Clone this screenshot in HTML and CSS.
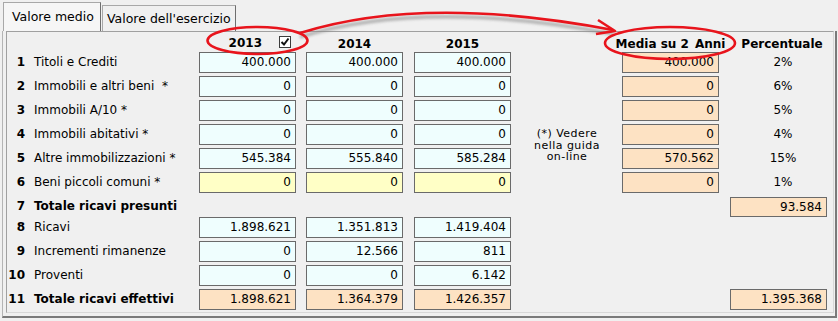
FILE: index.html
```html
<!DOCTYPE html>
<html lang="it">
<head>
<meta charset="utf-8">
<title>Valore medio</title>
<link rel="stylesheet" href="styles.css">
</head>
<body>
<div class="tabs">
  <div class="tab active">Valore medio</div>
  <div class="tab">Valore dell'esercizio</div>
</div>
<div class="page">
  <div class="panel">
    <div class="grid">
      <div class="hd blank"></div>
      <div class="hd c1"><span>2013</span><span class="check"><svg width="10" height="10" viewBox="0 0 10 10"><path d="M1.5 5 L4 7.5 L8.5 1.5" fill="none" stroke="#111" stroke-width="2"/></svg></span></div>
      <div class="hd c2">2014</div>
      <div class="hd c3">2015</div>
      <div class="hd blank-note"></div>
      <div class="hd cm">Media su 2<span class="gap">Anni</span></div>
      <div class="hd cp">Percentuale</div>

      <div class="num">1</div><div class="lbl">Titoli e Crediti</div>
      <div class="box cyan c1">400.000</div><div class="box cyan c2">400.000</div><div class="box cyan c3">400.000</div>
      <div class="box peach cm">400.000</div><div class="pct">2%</div>

      <div class="num">2</div><div class="lbl">Immobili e altri beni&nbsp; *</div>
      <div class="box cyan c1">0</div><div class="box cyan c2">0</div><div class="box cyan c3">0</div>
      <div class="box peach cm">0</div><div class="pct">6%</div>

      <div class="num">3</div><div class="lbl">Immobili A/10 *</div>
      <div class="box cyan c1">0</div><div class="box cyan c2">0</div><div class="box cyan c3">0</div>
      <div class="box peach cm">0</div><div class="pct">5%</div>

      <div class="num">4</div><div class="lbl">Immobili abitativi *</div>
      <div class="box cyan c1">0</div><div class="box cyan c2">0</div><div class="box cyan c3">0</div>
      <div class="note">(*) Vedere<br>nella guida<br>on-line</div>
      <div class="box peach cm">0</div><div class="pct">4%</div>

      <div class="num">5</div><div class="lbl">Altre immobilizzazioni *</div>
      <div class="box cyan c1">545.384</div><div class="box cyan c2">555.840</div><div class="box cyan c3">585.284</div>
      <div class="box peach cm">570.562</div><div class="pct">15%</div>

      <div class="num">6</div><div class="lbl">Beni piccoli comuni *</div>
      <div class="box yellow c1">0</div><div class="box yellow c2">0</div><div class="box yellow c3">0</div>
      <div class="box peach cm">0</div><div class="pct">1%</div>

      <div class="num">7</div><div class="lbl bold">Totale ricavi presunti</div>
      <div class="box peach cp short">93.584</div>

      <div class="num">8</div><div class="lbl">Ricavi</div>
      <div class="box cyan c1">1.898.621</div><div class="box cyan c2">1.351.813</div><div class="box cyan c3">1.419.404</div>

      <div class="num">9</div><div class="lbl">Incrementi rimanenze</div>
      <div class="box cyan c1">0</div><div class="box cyan c2">12.566</div><div class="box cyan c3">811</div>

      <div class="num">10</div><div class="lbl">Proventi</div>
      <div class="box cyan c1">0</div><div class="box cyan c2">0</div><div class="box cyan c3">6.142</div>

      <div class="num">11</div><div class="lbl bold">Totale ricavi effettivi</div>
      <div class="box peach c1">1.898.621</div><div class="box peach c2">1.364.379</div><div class="box peach c3">1.426.357</div>
      <div class="box peach cp">1.395.368</div>
    </div>
  </div>
</div>

<svg class="marks" width="838" height="321" viewBox="0 0 838 321">
  <defs>
    <filter id="blur" x="-10%" y="-50%" width="120%" height="200%">
      <feGaussianBlur stdDeviation="1.5"/>
    </filter>
  </defs>
  <path d="M300 37 Q 424 -2 614 34" fill="none" stroke="#8a8a8a" stroke-width="3" opacity="0.7" filter="url(#blur)"/>
  <path d="M300 33 Q 424 -6 613 30" fill="none" stroke="#e8141c" stroke-width="2.6"/>
  <path d="M598 20 L615 31 L596 34" fill="none" stroke="#e8141c" stroke-width="2.6" stroke-linejoin="round"/>
  <ellipse cx="257.5" cy="40.5" rx="50" ry="13.5" fill="none" stroke="#e8141c" stroke-width="2.6"/>
  <ellipse cx="670" cy="43" rx="65" ry="16" fill="none" stroke="#e8141c" stroke-width="2.6"/>
</svg>
</body>
</html>
```
FILE: styles.css
```css
* { box-sizing: border-box; }
html, body { margin: 0; padding: 0; }
body {
  width: 838px;
  height: 321px;
  overflow: hidden;
  background: #f0f0f0;
  font-family: "DejaVu Sans", Verdana, sans-serif;
  font-size: 12px;
  color: #000;
  position: relative;
}

.tabs {
  display: flex;
  align-items: flex-end;
  height: 31px;
  padding-left: 3px;
}
.tab {
  height: 26px;
  width: 134px;
  padding: 5px 0 0 4px;
  border: 1px solid #a8a8a8;
  border-bottom: none;
  border-right: 1px solid #6e6e6e;
  background: #f0f0f0;
  font-size: 12.5px;
  white-space: nowrap;
  margin-left: 1px;
}
.tab.active {
  height: 29px;
  width: 98px;
  padding: 6px 0 0 8px;
  margin-left: 0;
  background: #f6f6f6;
}

.page {
  margin-left: 2px;
  width: 835px;
  height: 287px;
  border-left: 1px solid #b4b4b4;
  border-right: 2px solid #7a7a7a;
  border-bottom: 2px solid #7a7a7a;
  padding: 0 1px 3px 3px;
}
.panel {
  height: 282px;
  border: 1px solid #a0a0a0;
  border-right-color: #d8d8d8;
  border-bottom-color: #d8d8d8;
  padding-left: 1px;
  overflow: hidden;
}

.grid {
  display: grid;
  grid-template-columns: 26px 165px 107px 108px 97px 111px 108px 104px;
  grid-template-rows: 20px repeat(6, 24px) 21px repeat(4, 24px);
  align-items: start;
}

.hd {
  height: 20px;
  display: flex;
  align-items: center;
  justify-content: center;
  font-weight: bold;
  white-space: nowrap;
  grid-row: 1;
}
.hd.blank { grid-column: 1 / span 2; }
.hd.blank-note { grid-column: 6; }
.hd.c1 { grid-column: 3; justify-content: flex-end; padding-right: 15px; }
.hd.c1 span:first-child { margin-right: 17px; margin-top: 2px; }
.hd.c2 { grid-column: 4; width: 97px; margin-top: 2px; }
.hd.c3 { grid-column: 5; width: 97px; margin-top: 2px; }
.hd.cm { grid-column: 7; width: 97px; margin-top: 2px; }
.hd.cp { grid-column: 8; margin-top: 2px; }
.gap { margin-left: 6px; }

.check {
  width: 12px;
  height: 12px;
  border: 1px solid #3c3c3c;
  background: #fff;
  display: flex;
  align-items: center;
  justify-content: center;
}

.num {
  grid-column: 1;
  height: 21px;
  line-height: 21px;
  text-align: right;
  padding-right: 9px;
  font-weight: bold;
}
.lbl {
  grid-column: 2;
  height: 21px;
  line-height: 21px;
  white-space: nowrap;
}
.bold { font-weight: bold; }

.box {
  width: 97px;
  height: 21px;
  line-height: 19px;
  border: 1px solid #6a6a6a;
  text-align: right;
  padding-right: 4px;
  white-space: nowrap;
}
.cyan { background: #effefe; }
.yellow { background: #ffffc6; }
.peach { background: #fde2c3; }
.box.short { height: 20px; line-height: 18px; margin-top: 1px; }

.c1 { grid-column: 3; }
.c2 { grid-column: 4; }
.c3 { grid-column: 5; }
.cm { grid-column: 7; }
.cp { grid-column: 8; }

.pct {
  grid-column: 8;
  height: 21px;
  line-height: 21px;
  text-align: center;
  padding-left: 2px;
}

.note {
  grid-column: 6;
  grid-row: 5 / span 2;
  text-align: center;
  font-size: 11px;
  letter-spacing: 0.45px;
  line-height: 11.6px;
  margin-top: 4px;
  padding-left: 1px;
}

.marks {
  position: absolute;
  left: 0;
  top: 0;
  pointer-events: none;
}
```
